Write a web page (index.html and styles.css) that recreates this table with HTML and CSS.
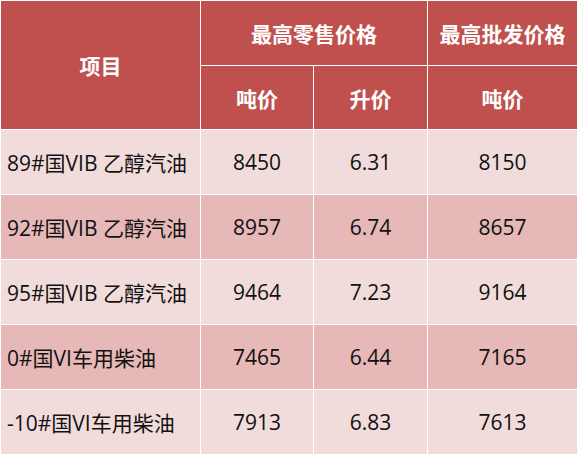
FILE: index.html
```html
<!DOCTYPE html>
<html lang="zh-CN">
<head>
    <meta charset="UTF-8">
    <meta name="viewport" content="width=device-width, initial-scale=1.0">
    <title>成品油最高价格</title>
    <link rel="stylesheet" href="styles.css">
</head>
<body>
    <table class="price-table">
        <colgroup>
            <col class="col-name">
            <col class="col-ton">
            <col class="col-litre">
            <col class="col-wholesale">
        </colgroup>
        <thead>
            <tr class="head-top">
                <th rowspan="2">项目</th>
                <th colspan="2">最高零售价格</th>
                <th>最高批发价格</th>
            </tr>
            <tr class="head-sub">
                <th>吨价</th>
                <th>升价</th>
                <th>吨价</th>
            </tr>
        </thead>
        <tbody>
            <tr class="light">
                <td class="name">89#国VIB 乙醇汽油</td>
                <td>8450</td>
                <td>6.31</td>
                <td>8150</td>
            </tr>
            <tr class="dark">
                <td class="name">92#国VIB 乙醇汽油</td>
                <td>8957</td>
                <td>6.74</td>
                <td>8657</td>
            </tr>
            <tr class="light">
                <td class="name">95#国VIB 乙醇汽油</td>
                <td>9464</td>
                <td>7.23</td>
                <td>9164</td>
            </tr>
            <tr class="dark">
                <td class="name">0#国VI车用柴油</td>
                <td>7465</td>
                <td>6.44</td>
                <td>7165</td>
            </tr>
            <tr class="light">
                <td class="name">-10#国VI车用柴油</td>
                <td>7913</td>
                <td>6.83</td>
                <td>7613</td>
            </tr>
        </tbody>
    </table>
</body>
</html>
```

FILE: styles.css
```css
body {
    margin: 0;
    background: #ffffff;
    font-family: "Open Sans", "Noto Sans CJK SC", sans-serif;
}
.price-table {
    border-collapse: separate;
    border-spacing: 1px;
    table-layout: fixed;
    width: 578px;
}
.col-name { width: 199px; }
.col-ton { width: 112px; }
.col-litre { width: 113px; }
.col-wholesale { width: 149px; }
.price-table th,
.price-table td {
    padding: 0;
    text-align: center;
    vertical-align: middle;
    white-space: nowrap;
}
.price-table th {
    background: #c0504d;
    color: #ffffff;
    font-size: 21px;
    font-weight: bold;
}
.head-top th { height: 64px; }
.head-sub th { height: 63px; }
.price-table td {
    height: 64px;
    font-size: 21px;
    color: #111111;
}
.price-table td.name {
    text-align: left;
    padding-left: 6px;
}
.light td { background: #f2dcdb; }
.dark td { background: #e6b8b7; }
```
